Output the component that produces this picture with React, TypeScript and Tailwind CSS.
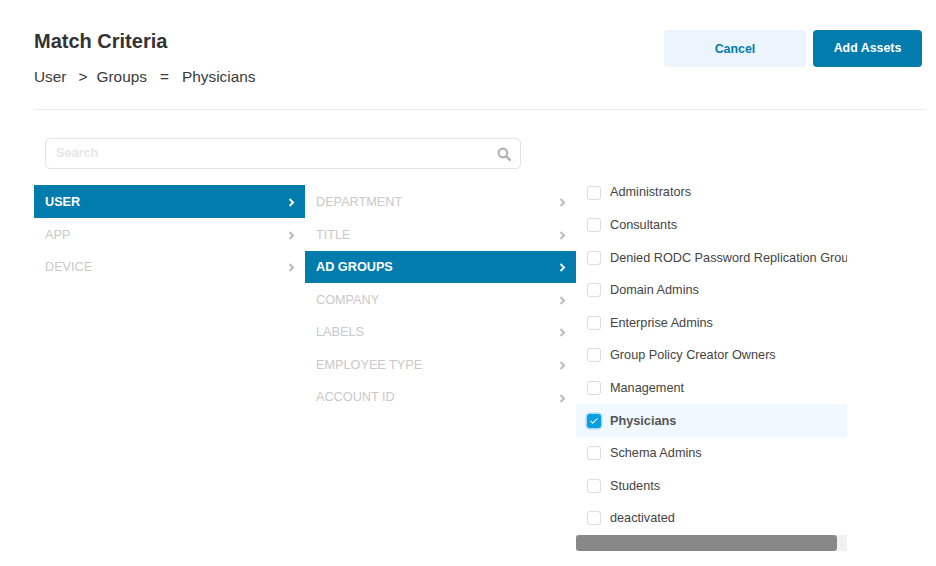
import { Check } from "lucide-react";

const FONT = "font-['Liberation_Sans',Arial,sans-serif]";

const USER_ROWS = ["USER", "APP", "DEVICE"];
const ATTR_ROWS = [
  "DEPARTMENT",
  "TITLE",
  "AD GROUPS",
  "COMPANY",
  "LABELS",
  "EMPLOYEE TYPE",
  "ACCOUNT ID",
];
const GROUPS = [
  "Administrators",
  "Consultants",
  "Denied RODC Password Replication Group",
  "Domain Admins",
  "Enterprise Admins",
  "Group Policy Creator Owners",
  "Management",
  "Physicians",
  "Schema Admins",
  "Students",
  "deactivated",
];

function Angle({ active }: { active: boolean }) {
  return (
    <svg
      viewBox="0 0 8 10"
      className="h-[9px] w-[7px]"
      fill="none"
      stroke={active ? "#fff" : "#b9b9b9"}
      strokeWidth="2.2"
      aria-hidden
    >
      <path d="M1.8 1 L5.8 5 L1.8 9" />
    </svg>
  );
}

function MenuRow({ label, active }: { label: string; active: boolean }) {
  return (
    <div
      className={
        active
          ? "flex h-[32.6px] items-center justify-between bg-[#027bad] pt-[1.5px] pr-[10px] pl-[11px] text-[12.7px] font-bold text-white"
          : "flex h-[32.6px] items-center justify-between pt-[1.5px] pr-[10px] pl-[11px] text-[12.7px] text-[#c9c9c9]"
      }
    >
      <span>{label}</span>
      <Angle active={active} />
    </div>
  );
}

function GroupRow({ label, checked }: { label: string; checked: boolean }) {
  return (
    <div
      className={
        checked
          ? "flex h-[32.6px] items-center bg-[#f0f9ff] pl-[11px] text-[12.7px] font-bold whitespace-nowrap text-[#555]"
          : "flex h-[32.6px] items-center pl-[11px] text-[12.7px] whitespace-nowrap text-[#444]"
      }
    >
      {checked ? (
        <span className="mr-[9px] flex h-[14px] w-[14px] shrink-0 items-center justify-center rounded-[3px] bg-[#0a9fe3] shadow-[0_0_0_1.5px_#a9d8f5]">
          <Check className="h-[10px] w-[10px] text-white" strokeWidth={2.5} aria-hidden />
        </span>
      ) : (
        <span className="mr-[9px] h-[14px] w-[14px] shrink-0 rounded-[3px] border border-[#dcdcdc] bg-white" />
      )}
      <span className="pt-px">{label}</span>
    </div>
  );
}

export default function App() {
  return (
    <div className={`${FONT} h-[566px] w-[936px] overflow-hidden bg-white pr-[10px] pl-[34px]`}>
      <div className="flex h-[110px] items-start justify-between border-b border-[#e8e8e8]">
        <div>
          <h1 className="mt-[30px] text-[20px] leading-[23px] font-bold text-[#333]">Match Criteria</h1>
          <div className="mt-[14px] flex text-[15.4px] leading-[20px] text-[#3a3a3a]">
            <span>User</span>
            <span className="ml-[12px]">&gt;</span>
            <span className="ml-[9px]">Groups</span>
            <span className="ml-[13px]">=</span>
            <span className="ml-[13px]">Physicians</span>
          </div>
        </div>
        <div className="mt-[30px] mr-[4px] flex gap-[7px]">
          <button className="h-[37px] w-[142px] rounded-[4px] bg-[#ecf5fd] pt-px text-[12.4px] font-bold text-[#027bad]">
            Cancel
          </button>
          <button className="h-[37px] w-[109px] rounded-[4px] bg-[#027bad] text-[12.4px] font-bold text-white">
            Add Assets
          </button>
        </div>
      </div>

      <div className="mt-[28px] ml-[11px] flex h-[31px] w-[476px] items-center justify-between rounded-[5px] border border-[#e3e3e3] pr-[9px] pl-[10px]">
        <span className="text-[12.7px] font-bold text-[#e6e6e6]">Search</span>
        <svg viewBox="0 0 16 16" className="h-[14px] w-[14px]" fill="none" stroke="#b4b4b4" aria-hidden>
          <circle cx="6.8" cy="6.8" r="5" strokeWidth="2.4" />
          <path d="M10.6 10.6 L14.6 14.6" strokeWidth="2.8" strokeLinecap="round" />
        </svg>
      </div>

      <div className="mt-[16.4px] flex items-start">
        <div className="w-[271px]">
          {USER_ROWS.map((row) => (
            <MenuRow key={row} label={row} active={row === "USER"} />
          ))}
        </div>
        <div className="w-[271px]">
          {ATTR_ROWS.map((row) => (
            <MenuRow key={row} label={row} active={row === "AD GROUPS"} />
          ))}
        </div>
        <div className="-mt-[9.2px] w-[271px] overflow-hidden">
          {GROUPS.map((group) => (
            <GroupRow key={group} label={group} checked={group === "Physicians"} />
          ))}
          <div className="h-4 bg-[#f1f1f1]">
            <div className="h-4 w-[261px] rounded-[3px] bg-[#888]" />
          </div>
        </div>
      </div>
    </div>
  );
}
